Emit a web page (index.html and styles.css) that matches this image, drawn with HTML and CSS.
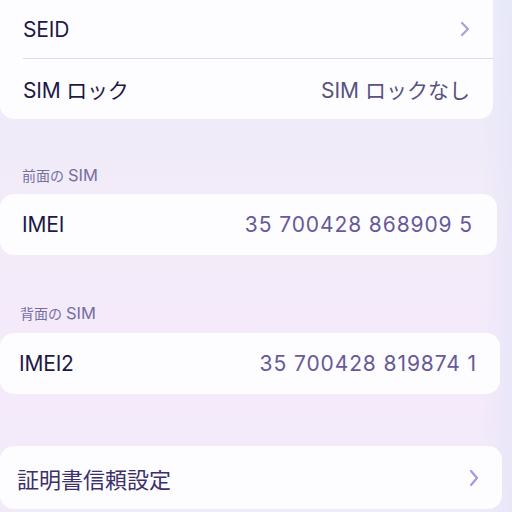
FILE: index.html
```html
<!DOCTYPE html>
<html lang="ja">
<head>
<meta charset="utf-8">
<link rel="stylesheet" href="styles.css">
</head>
<body>
<div class="screen">
  <section class="card c1">
    <div class="row">
      <span class="label">SEID</span>
      <svg class="chev" width="10" height="16" viewBox="0 0 10 16"><path d="M2 2 L8 8 L2 14" fill="none" stroke="currentColor" stroke-width="2.2" stroke-linecap="round" stroke-linejoin="round"/></svg>
    </div>
    <div class="sep"></div>
    <div class="row">
      <span class="label">SIM ロック</span>
      <span class="value">SIM ロックなし</span>
    </div>
  </section>

  <div class="header h1">前面の <span class="lat">SIM</span></div>
  <section class="card c2">
    <div class="row">
      <span class="label">IMEI</span>
      <span class="value num">35 700428 868909 5</span>
    </div>
  </section>

  <div class="header h2">背面の <span class="lat">SIM</span></div>
  <section class="card c3">
    <div class="row">
      <span class="label">IMEI2</span>
      <span class="value num">35 700428 819874 1</span>
    </div>
  </section>

  <section class="card c4">
    <div class="row">
      <span class="label jp">証明書信頼設定</span>
      <svg class="chev" width="10" height="18" viewBox="0 0 10 18"><path d="M2 2 L8 9 L2 16" fill="none" stroke="currentColor" stroke-width="2.2" stroke-linecap="round" stroke-linejoin="round"/></svg>
    </div>
  </section>
</div>
</body>
</html>
```

FILE: styles.css
```css
html, body {
  margin: 0;
  padding: 0;
  width: 512px;
  height: 512px;
  overflow: hidden;
}
body {
  font-family: Inter, "Noto Sans CJK JP", sans-serif;
  background:
    linear-gradient(to left, rgba(230,230,248,0.8) 0px, rgba(236,235,250,0) 30px),
    linear-gradient(to bottom, #eceef9 0px, #efebf8 130px, #f4ebf9 220px, #f4eafa 400px, #f1eaf9 512px);
}
.screen {
  display: flex;
  flex-direction: column;
}
.card {
  background: #fdfcff;
  border-radius: 14px;
}
.c1 {
  margin-top: -10px;
  margin-right: 19px;
  padding-top: 10px;
  border-top-left-radius: 0;
  border-top-right-radius: 0;
}
.c2 { margin-right: 15px; height: 61px; }
.c3 { margin-right: 12px; height: 61px; }
.c4 { margin-top: 52px; margin-right: 10px; height: 63px; }
.row {
  display: flex;
  align-items: center;
  justify-content: space-between;
  height: 100%;
}
.c1 .row { height: 58px; padding: 0 23px; }
.c1 .row + .sep + .row { height: 60px; }
.c2 .row { padding: 0 24px 0 22px; }
.c3 .row { padding: 0 23px 0 19px; }
.c4 .row { padding: 0 23px 0 17px; }
.sep {
  height: 1px;
  background: #dcdaee;
  margin-left: 23px;
}
.label {
  font-size: 21px;
  color: #1d1944;
  letter-spacing: -0.2px;
}
.jp {
  font-size: 22px;
  color: #3a306b;
  letter-spacing: 0;
}
.value {
  font-size: 21px;
  color: #57527f;
}
.num {
  color: #665a99;
  letter-spacing: 0.9px;
}
.chev { color: #a6a4d8; }
.c4 .chev { color: #a09be0; }
.header {
  font-size: 14px;
  color: #7470a2;
  height: 20px;
  line-height: 20px;
}
.lat { font-size: 16.5px; }
.h1 { margin-top: 46px; margin-bottom: 9px; padding-left: 22px; }
.h2 { margin-top: 48px; margin-bottom: 10px; padding-left: 20px; }
```
